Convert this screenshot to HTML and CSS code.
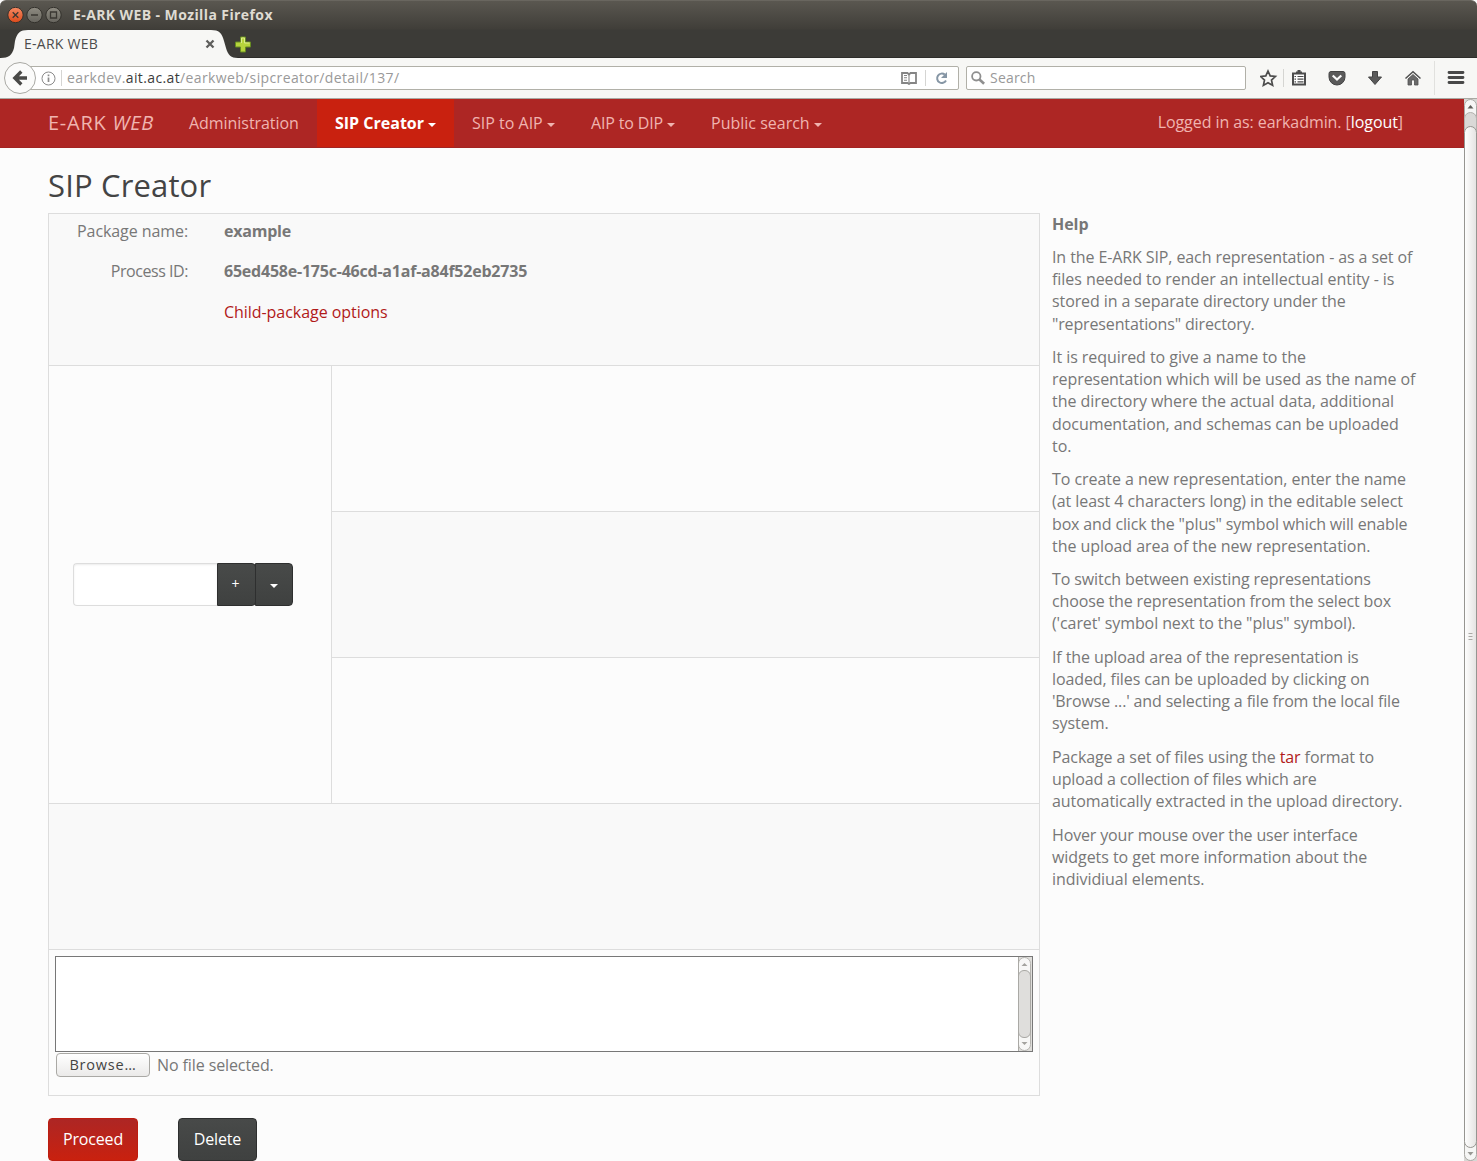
FILE: index.html
```html
<!DOCTYPE html>
<html lang="en">
<head>
<meta charset="utf-8">
<title>E-ARK WEB</title>
<link rel="stylesheet" href="styles.css">
</head>
<body>
<div class="window">
  <header class="titlebar">
    <svg class="controls" width="56" height="18" viewBox="0 0 56 18">
      <defs>
        <linearGradient id="orange" x1="0" y1="0" x2="0" y2="1"><stop offset="0" stop-color="#f58a63"/><stop offset="1" stop-color="#dd4a1a"/></linearGradient>
        <linearGradient id="gray" x1="0" y1="0" x2="0" y2="1"><stop offset="0" stop-color="#8f8c82"/><stop offset="1" stop-color="#66645d"/></linearGradient>
      </defs>
      <g stroke="#33312c">
        <circle cx="9.500" cy="8" r="7.700" fill="url(#orange)"/>
        <circle cx="28.500" cy="8" r="7.700" fill="url(#gray)"/>
        <circle cx="47.500" cy="8" r="7.700" fill="url(#gray)"/>
      </g>
      <path d="M6.700 5.200l5.600 5.600M12.300 5.200l-5.600 5.600M25 8h7M44.500 5h6v6h-6z" fill="none" stroke="#3a3732" stroke-width="1.300"/>
    </svg>
    <span class="window-title">E-ARK WEB - Mozilla Firefox</span>
  </header>
  <div class="tabs">
    <div class="tab">
      <svg class="tab-shape" width="238" height="28" viewBox="0 0 238 28"><path d="M0 28C9 28 12 25 14 18L15 11C17 3 20 0 28 0H211C219 0 222 3 224 11L226 18C228 25 231 28 238 28z" fill="#f7f7f5"/></svg>
      <span class="tab-title">E-ARK WEB</span>
      <svg class="tab-close" width="10" height="10" viewBox="0 0 10 10"><path d="M1.500 1.500l7 7M8.500 1.500l-7 7" stroke="#5e5e5c" stroke-width="2.300"/></svg>
    </div>
    <svg class="new-tab" width="17" height="17" viewBox="0 0 17 17"><path d="M6.500 1h5v5h5v5h-5v5h-5v-5h-5V6h5z" fill="#b6d43c" stroke="#668b22"/><path d="M7.500 7V2h3v5h5" fill="none" stroke="#dcec8c"/></svg>
  </div>
  <div class="toolbar">
    <svg class="back" width="34" height="34" viewBox="0 0 34 34"><circle cx="16" cy="17" r="15.500" fill="#fbfbfa" stroke="#a9a9a4"/><path d="M17.300 10.500L10.800 17l6.500 6.500M11.500 17H23" fill="none" stroke="#4a4a48" stroke-width="3.300"/></svg>
    <div class="urlbar">
      <svg class="info" width="15" height="15" viewBox="0 0 15 15"><circle cx="7.500" cy="7.500" r="6.500" fill="none" stroke="#8b8b8b"/><path d="M7.500 6.500V11M7.500 3.500v1.700" stroke="#8b8b8b" stroke-width="1.700"/></svg>
      <i class="sep"></i>
      <span class="url">earkdev.<b>ait.ac.at</b>/earkweb/sipcreator/detail/137/</span>
      <svg class="reader" width="16" height="13" viewBox="0 0 16 13"><path d="M1 1h5.500L8 2.500 9.500 1H15v10H9.500L8 12 6.500 11H1z" fill="#fff" stroke="#858585" stroke-width="1.800"/><path d="M8 2.500V11M3 3.500h3M3 5.800h3M3 8.200h3" stroke="#858585" stroke-width="1.100"/></svg>
      <i class="sep"></i>
      <svg class="reload" width="14" height="14" viewBox="0 0 14 14"><path d="M9.800 3.600A4.700 4.700 0 1 0 11 9.500" fill="none" stroke="#8696a5" stroke-width="2"/><path d="M12 1v6H6z" fill="#8696a5"/></svg>
    </div>
    <div class="searchbar">
      <svg width="14" height="14" viewBox="0 0 14 14"><circle cx="5.300" cy="5.300" r="4.200" fill="none" stroke="#8f8f8f" stroke-width="1.800"/><path d="M8.500 8.500l4.600 4.300" stroke="#8f8f8f" stroke-width="2.600"/></svg>
      <span>Search</span>
    </div>
    <svg class="actions" width="217" height="40" viewBox="1260 58 217 40">
      <path d="M1268 71l2.200 4.900 5.200.6-3.900 3.600 1.100 5.300-4.600-2.700-4.600 2.700 1.100-5.300-3.900-3.600 5.200-.6z" fill="none" stroke="#4c4c4c" stroke-width="1.700"/>
      <path d="M1283.500 69v18" stroke="#d5d5d2"/>
      <path d="M1293 73.500h12v11h-12z" fill="#fff" stroke="#4c4c4c" stroke-width="2"/><path d="M1296 74v-2.500h1.500V70h3v1.500h1.500V74z" fill="#4c4c4c"/><path d="M1297.500 76.500h6M1297.500 79.200h6M1297.500 81.900h6M1294.500 76.500h1.500M1294.500 79.200h1.500M1294.500 81.900h1.500" stroke="#4c4c4c" stroke-width="1.200"/>
      <path d="M1331 71.500h12q2 0 2 2v3.500a8 8 0 0 1-16 0v-3.500q0-2 2-2z" fill="#5a5a5a" stroke="#444"/><path d="M1332.700 75.500l4.300 4 4.300-4" fill="none" stroke="#fafafa" stroke-width="2.200"/>
      <path d="M1372.500 71.500h5V77h4l-6.500 7.500-6.500-7.500h4z" fill="#5a5a5a" stroke="#444"/>
      <path d="M1405.500 78.500l7.500-6.800 7.500 6.800" fill="none" stroke="#505050" stroke-width="1.500"/><path d="M1408 79l5-4.500 5 4.500v6h-3.500v-5h-3v5h-3.500z" fill="#6a6a6a" stroke="#505050" stroke-width=".8"/>
      <path d="M1434.500 61v34" stroke="#e1e1de"/>
      <path d="M1449 72.500h14M1449 77.500h14M1449 82.500h14" stroke="#484848" stroke-width="2.800" stroke-linecap="round"/>
    </svg>
  </div>
  <div class="viewport">
    <div class="page">
      <nav class="navbar">
        <a class="brand">E-ARK <em>WEB</em></a>
        <a class="item admin">Administration</a>
        <a class="item active">SIP Creator <i class="caret"></i></a>
        <a class="item sip">SIP to AIP <i class="caret"></i></a>
        <a class="item aip">AIP to DIP <i class="caret"></i></a>
        <a class="item">Public search <i class="caret"></i></a>
        <span class="login">Logged in as: earkadmin. [<a>logout</a>]</span>
      </nav>
      <main class="content">
        <h1>SIP Creator</h1>
        <div class="columns">
          <section class="panel">
            <dl class="meta shade">
              <dt>Package name:</dt><dd>example</dd>
              <dt class="process">Process ID:</dt><dd>65ed458e-175c-46cd-a1af-a84f52eb2735</dd>
              <dt></dt><dd class="link">Child-package options</dd>
            </dl>
            <div class="representations">
              <div class="chooser">
                <div class="group">
                  <input class="name" type="text" aria-label="Representation name">
                  <button class="dark add">+</button>
                  <button class="dark drop" aria-label="Existing representations"><i class="caret"></i></button>
                </div>
              </div>
              <div class="areas"><div></div><div class="shade"></div><div></div></div>
            </div>
            <div class="status shade"></div>
            <div class="upload">
              <div class="log">
                <svg width="14" height="94" viewBox="0 0 14 94"><rect width="14" height="94" fill="#dfdedb"/><rect x=".5" y=".5" width="12" height="93" rx="6" fill="#f7f7f6" stroke="#b5b4b0"/><rect x=".5" y="13.500" width="12" height="67" rx="5.500" fill="#dfdedc" stroke="#a9a8a4"/><path d="M3.500 9h6L6.500 6zM3.500 85h6l-3 3z" fill="#a4a39f"/><path d="M.5 0v94" stroke="#aaa9a5"/></svg>
              </div>
              <div class="file"><button class="browse">Browse…</button><span>No file selected.</span></div>
            </div>
          </section>
          <aside class="help">
            <p><b>Help</b></p>
            <p><span class="snug">In the E-ARK SIP, each representation - as a set of</span><br>files needed to render an intellectual entity - is<br><span class="snug">stored in a separate directory under the</span><br><span class="tight">"representations" directory.</span></p>
            <p>It is required to give a name to the<br>representation which will be used as the name of<br>the directory where the actual data, additional<br>documentation, and schemas can be uploaded<br>to.</p>
            <p>To create a new representation, enter the name<br>(at least 4 characters long) in the editable select<br><span class="tight">box and click the "plus" symbol which will enable</span><br>the upload area of the new representation.</p>
            <p><span class="snug">To switch between existing representations</span><br><span class="tight">choose the representation from the select box</span><br><span class="snug">('caret' symbol next to the "plus" symbol).</span></p>
            <p><span class="snug">If the upload area of the representation is<br>loaded, files can be uploaded by clicking on</span><br><span class="tight">'Browse ...' and selecting a file from the local file</span><br>system.</p>
            <p><span class="snug">Package a set of files using the <a>tar</a> format to</span><br><span class="tight">upload a collection of files which are</span><br>automatically extracted in the upload directory.</p>
            <p><span class="tight">Hover your mouse over the user interface</span><br>widgets to get more information about the<br>individiual elements.</p>
          </aside>
        </div>
        <div class="buttons"><button class="proceed">Proceed</button><button class="dark delete">Delete</button></div>
      </main>
    </div>
    <svg class="scrollbar" width="13" height="1062" viewBox="0 0 13 1062">
      <defs><linearGradient id="thumb"><stop offset="0" stop-color="#fff"/><stop offset="1" stop-color="#e4e3e1"/></linearGradient></defs>
      <rect width="13" height="1062" fill="#d8d7d4"/>
      <rect x=".5" y=".5" width="12" height="1061" rx="6" fill="#f6f6f5" stroke="#aaa9a5"/>
      <rect x=".5" y="13.500" width="12" height="40" rx="6" fill="#dad9d7" stroke="#b2b1ad"/>
      <rect x=".5" y="27.500" width="12" height="1021" rx="6" fill="url(#thumb)" stroke="#969591"/>
      <path d="M3.500 9.500h6l-3-3.500z" fill="#5f5e5b"/><path d="M3.500 1053h6l-3 3.500z" fill="#999894"/>
      <path d="M4.500 534.500h4M4.500 537.500h4M4.500 540.500h4" stroke="#aaa9a5"/>
    </svg>
  </div>
</div>
</body>
</html>
```
FILE: styles.css
```css
* { box-sizing: border-box; }
body { margin: 0; font: 16px/22.22px "Open Sans", "Noto Sans", sans-serif; color: #777; background: #fcfcfc; }
svg { display: block; flex: none; }
button { font: inherit; padding: 0; }
.window { width: 1477px; height: 1161px; overflow: hidden; }

/* Browser chrome */
.titlebar { height: 30px; display: flex; align-items: center; gap: 11px; padding-left: 6px; background: linear-gradient(#5a5750, #403e39 28px, #3c3b37); border-top: 1px solid #69665f; border-radius: 6px 6px 0 0; }
.window-title { font-size: 14px; font-weight: 700; color: #dfdbd2; letter-spacing: .4px; white-space: nowrap; }
.tabs { height: 28px; display: flex; align-items: flex-start; background: #3c3b37; border-bottom: 1px solid #2e2d2a; }
.tab { width: 234px; height: 28px; display: grid; grid-template: 28px / 24px 180px 1fr; align-items: center; font-size: 14px; letter-spacing: .25px; color: #4c4c4c; }
.tab-shape { grid-area: 1 / 1 / 2 / 4; }
.tab-title { grid-area: 1 / 2; }
.tab-close { grid-area: 1 / 3; margin-left: 1px; }
.new-tab { margin-top: 6px; }
.toolbar { height: 41px; display: flex; align-items: center; padding-left: 4px; background: #f7f7f5; border-bottom: 1px solid #aaa9a3; }
.back { z-index: 1; margin-right: -18px; }
.urlbar, .searchbar { flex: none; height: 24px; display: flex; align-items: center; background: #fff; border: 1px solid #b1b0a8; border-radius: 2px; font-size: 14px; line-height: 22px; white-space: nowrap; }
.urlbar { width: 939px; padding-left: 20px; color: #999; }
.info { margin-right: 5px; }
.sep { width: 1px; height: 16px; background: #d5d5d3; }
.url { margin-left: 5px; flex: 1; letter-spacing: .37px; }
.url b { font-weight: 400; color: #3c3c3c; }
.reader { margin-right: 8px; }
.reload { margin: 0 9px; }
.searchbar { width: 280px; margin: 0 14px 0 7px; padding-left: 4px; gap: 5px; color: #999; letter-spacing: .2px; }

/* Page */
.viewport { display: flex; height: 1062px; }
.page { width: 1464px; }
.navbar { height: 49px; display: flex; background: #ad2624; border-bottom: 1px solid #a32422; color: #f0b4b0; line-height: 48px; white-space: nowrap; }
.brand { padding-left: 48px; width: 171px; font-size: 20px; letter-spacing: .75px; }
.item { padding: 0 18px; }
.caret { display: inline-block; border: 4px solid transparent; border-top-color: currentColor; border-bottom: 0; vertical-align: 2px; }
.admin { width: 146px; letter-spacing: -.05px; }
.active { width: 137px; background: #c9210f; color: #fff; font-weight: 700; }
.sip { width: 119px; }
.aip { width: 120px; letter-spacing: -.15px; }
.login { margin: -1px 61px 0 auto; letter-spacing: -.07px; }
.login a { color: #fff; }
.content { padding: 0 48px; }
h1 { margin: 0; height: 65px; padding-top: 18px; font-size: 31px; line-height: 38px; font-weight: 400; letter-spacing: .15px; color: #444; }
.columns { display: flex; gap: 12px; }
.panel { flex: none; width: 992px; height: 883px; border: 1px solid #ddd; display: flex; flex-direction: column; }
.shade { background: #f9f9f9; }
.meta { margin: 0; height: 151px; padding-top: 6px; display: grid; grid-template-columns: 139px 1fr; grid-template-rows: 40px 41px 40px; column-gap: 36px; }
.meta dt { text-align: right; letter-spacing: -.08px; }
.meta .process { letter-spacing: -.45px; }
.meta dd { margin: 0; font-weight: 700; letter-spacing: -.22px; }
.meta .link { font-weight: 400; letter-spacing: -.05px; color: #b11a1a; }
.representations { height: 438px; display: flex; border-top: 1px solid #ddd; }
.chooser { width: 282px; padding-left: 24px; display: flex; align-items: center; }
.group { display: flex; }
.name { width: 144px; height: 43px; border: 1px solid #ddd; border-right: 0; border-radius: 4px 0 0 4px; background: #fff; box-shadow: inset 0 1px 2px rgba(0,0,0,.08); }
.dark { border: 1px solid #2e2f2f; color: #fff; background: linear-gradient(#484a49, #3f4140); }
.add { width: 39px; height: 43px; padding-right: 2px; border-radius: 0 4px 4px 0; font-size: 14px; }
.drop { width: 38px; margin-left: -1px; height: 43px; padding-right: 1px; border-radius: 0 4px 4px 0; }
.areas { flex: 1; border-left: 1px solid #ddd; display: grid; grid-template-rows: 145px 146px 146px; }
.areas div + div { border-top: 1px solid #ddd; }
.status { height: 146px; border-top: 1px solid #ddd; }
.upload { flex: 1; border-top: 1px solid #ddd; padding: 6px; }
.log { height: 96px; border: 1px solid #777; background: #fff; display: flex; justify-content: flex-end; }
.file { display: flex; align-items: center; gap: 7px; padding: 1px 0 0 1px; letter-spacing: -.1px; }
.browse { width: 94px; height: 24px; font-size: 14.500px; line-height: 20px; letter-spacing: .8px; color: #444; border: 1px solid #aaa9a5; border-radius: 4px; background: linear-gradient(#fff, #ebeae9); }
.help { margin-top: -.4px; white-space: nowrap; letter-spacing: -.055px; }
.snug { letter-spacing: -.1px; }
.tight { letter-spacing: -.145px; }
.help p { margin: 0 0 11.100px; }
.help a { color: #b11a1a; }
.buttons { display: flex; gap: 40px; margin-top: 22px; }
.buttons button { height: 43px; border-radius: 4px; letter-spacing: -.15px; }
.proceed { width: 90px; color: #fff; border: 1px solid #bd1d10; background: linear-gradient(#ad2624, #c9210f); }
.delete { width: 79px; }
```
